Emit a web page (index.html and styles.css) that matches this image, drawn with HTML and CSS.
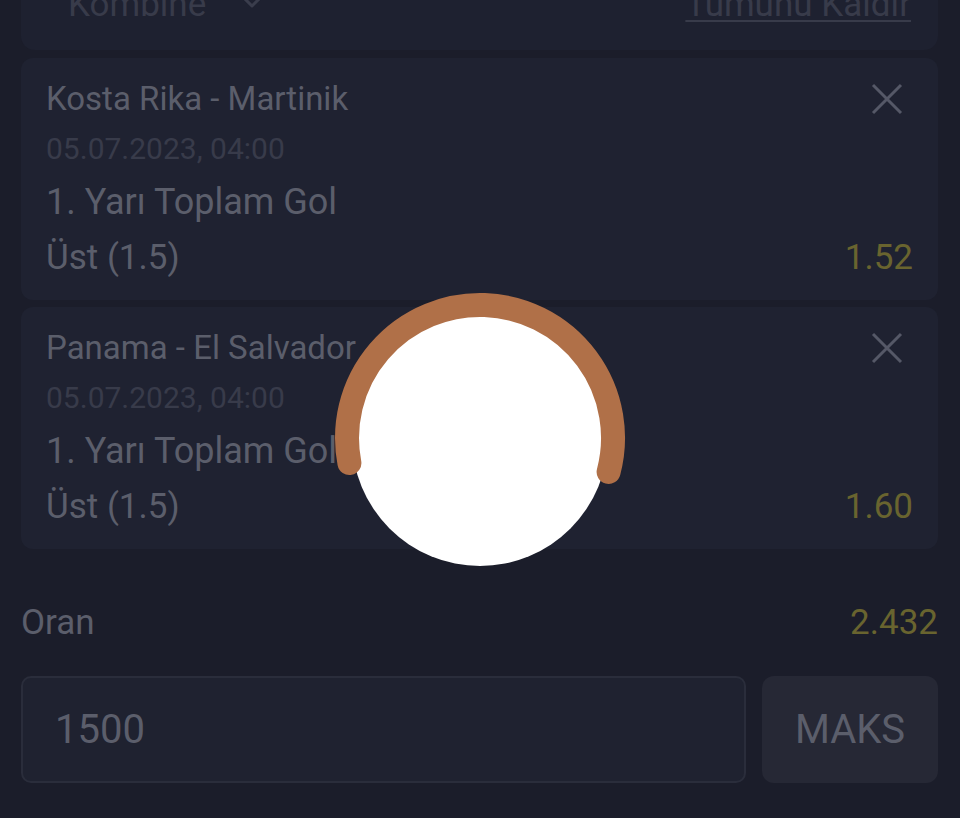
FILE: index.html
```html
<!DOCTYPE html>
<html lang="tr">
<head>
  <meta charset="UTF-8">
  <meta name="viewport" content="width=device-width, initial-scale=1.0">
  <title>Kupon</title>
  <link rel="stylesheet" href="styles.css">
</head>
<body>
  <div class="slip">
    <div class="mode-card">
      <div class="mode-select">
        <span>Kombine</span>
        <svg class="chevron" width="24" height="14" viewBox="0 0 24 14">
          <path d="M2 2 L12 12 L22 2" fill="none" stroke="#3a3d4c" stroke-width="3" stroke-linecap="round" stroke-linejoin="round"/>
        </svg>
      </div>
      <a class="clear-all">Tümünü Kaldır</a>
    </div>

    <div class="bet">
      <div class="bet-head">
        <span class="teams">Kosta Rika - Martinik</span>
        <svg class="close" width="32" height="32" viewBox="0 0 32 32">
          <path d="M2 2 L30 30 M30 2 L2 30" stroke="#555867" stroke-width="3"/>
        </svg>
      </div>
      <div class="date">05.07.2023, 04:00</div>
      <div class="market">1. Yarı Toplam Gol</div>
      <div class="pick">
        <span>Üst (1.5)</span>
        <span class="odd">1.52</span>
      </div>
    </div>

    <div class="bet">
      <div class="bet-head">
        <span class="teams">Panama - El Salvador</span>
        <svg class="close" width="32" height="32" viewBox="0 0 32 32">
          <path d="M2 2 L30 30 M30 2 L2 30" stroke="#555867" stroke-width="3"/>
        </svg>
      </div>
      <div class="date">05.07.2023, 04:00</div>
      <div class="market">1. Yarı Toplam Gol</div>
      <div class="pick">
        <span>Üst (1.5)</span>
        <span class="odd">1.60</span>
      </div>
    </div>

    <div class="total">
      <span>Oran</span>
      <span class="odd">2.432</span>
    </div>

    <div class="stake">
      <div class="stake-input">1500</div>
      <button class="max-btn">MAKS</button>
    </div>
  </div>

  <!-- yükleniyor -->
  <div class="loader">
    <svg width="300" height="300" viewBox="0 0 300 300">
      <circle cx="150" cy="150" r="128" fill="#ffffff"/>
      <path d="M19.4 175 A133 133 0 1 1 278.6 184" fill="none" stroke="#b07048" stroke-width="24" stroke-linecap="round"/>
    </svg>
  </div>
</body>
</html>
```

FILE: styles.css
```css
* {
  box-sizing: border-box;
}

body {
  margin: 0;
  height: 818px;
  overflow: hidden;
  background: #1b1d2a;
  font-family: Roboto, "Noto Sans", sans-serif;
  color: #5b5e6b;
}

.slip {
  padding: 0 22px 0 21px;
}

.mode-card {
  margin-top: -50px;
  padding: 30px 27px 20px 47px;
  background: #1e2130;
  border-radius: 14px;
  display: flex;
  justify-content: space-between;
  font-size: 35px;
  line-height: 50px;
  color: #383b4a;
}

.mode-select {
  display: flex;
  align-items: flex-start;
}

.chevron {
  margin-left: 34px;
  margin-top: 14px;
}

.clear-all {
  text-decoration: underline;
  text-decoration-thickness: 2px;
  text-underline-offset: 4px;
}

.bet {
  margin-top: 8px;
  height: 242px;
  padding: 16px 25px 14px 25px;
  background: #1f2231;
  border-radius: 12px;
}

.bet + .bet {
  margin-top: 7px;
}

.bet-head {
  display: flex;
  justify-content: space-between;
  align-items: center;
  font-size: 33px;
  line-height: 50px;
}

.close {
  margin-right: 10px;
}

.date {
  font-size: 30px;
  line-height: 50px;
  color: #383b4a;
}

.market {
  font-size: 36px;
  line-height: 56px;
}

.pick {
  display: flex;
  justify-content: space-between;
  font-size: 35px;
  line-height: 56px;
}

.odd {
  color: #69642f;
}

.total {
  margin-top: 46px;
  display: flex;
  justify-content: space-between;
  font-size: 35px;
  line-height: 56px;
}

.stake {
  margin-top: 25px;
  display: flex;
  gap: 16px;
}

.stake-input {
  flex: 1;
  height: 107px;
  padding: 0 32px;
  display: flex;
  align-items: center;
  border: 2px solid #2a2d3b;
  border-radius: 10px;
  background: #1f2230;
  font-size: 40px;
}

.max-btn {
  width: 176px;
  height: 107px;
  border: none;
  border-radius: 12px;
  background: #262835;
  color: #5b5e6b;
  font-family: inherit;
  font-size: 40px;
}

.loader {
  position: absolute;
  left: 330px;
  top: 288px;
}
```
